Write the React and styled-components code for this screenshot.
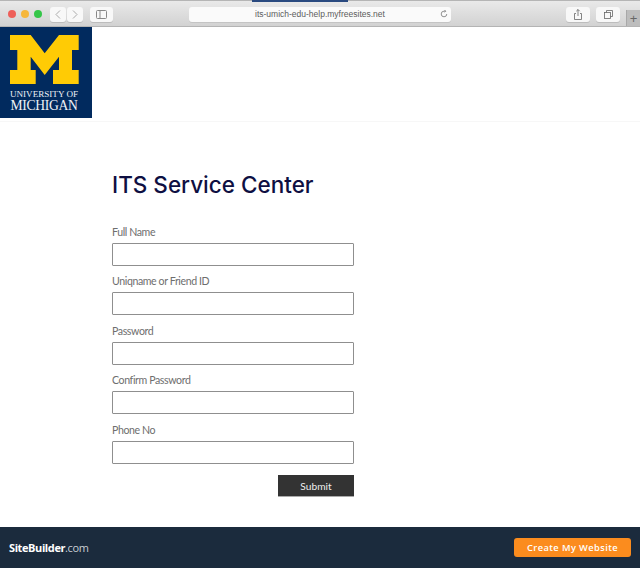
import React from 'react'
import styled, { createGlobalStyle } from 'styled-components'

const Global = createGlobalStyle`
  html, body { margin: 0; padding: 0; background: #fff; }
  body { font-family: "Open Sans", "Liberation Sans", sans-serif; }
  * { box-sizing: border-box; }
`

const Page = styled.div`
  width: 640px;
  height: 568px;
  display: flex;
  flex-direction: column;
  overflow: hidden;
`

const Chrome = styled.div`
  height: 27px;
  flex: none;
  position: relative;
  display: flex;
  align-items: center;
  padding: 1px 0 0 8px;
  background: linear-gradient(#e9e9e9, #d2d2d2);
  border-top: 1px solid #b5b5b5;
  border-bottom: 1px solid #b4b4b4;
`

const LoadBar = styled.div`
  position: absolute;
  top: -1px;
  left: 252px;
  width: 96px;
  height: 2px;
  background: #2a4a80;
`

const Dot = styled.span`
  width: 8px;
  height: 8px;
  margin-right: 5px;
  border-radius: 50%;
  background: ${p => p.$color};
`

const ChromeButton = styled.div`
  width: ${p => p.$w}px;
  height: 15px;
  margin-left: ${p => p.$ml || 0}px;
  flex: none;
  display: flex;
  align-items: center;
  justify-content: center;
  background: #f8f8f8;
  border-radius: 3px;
  box-shadow: 0 1px 0 #bdbdbd;
  color: #8a8a8a;
`

const UrlBar = styled.div`
  width: 262px;
  height: 15px;
  margin-left: 76px;
  flex: none;
  display: flex;
  align-items: center;
  justify-content: space-between;
  padding: 0 3px 0 66px;
  background: #fafafa;
  border-radius: 3px;
  box-shadow: 0 1px 0 #c4c4c4;
  font-family: "Liberation Sans", sans-serif;
  font-size: 8.5px;
  color: #5c5c5c;
`

const NewTab = styled.div`
  position: absolute;
  right: 0;
  bottom: 0;
  width: 14px;
  height: 16px;
  display: flex;
  align-items: center;
  justify-content: center;
  background: #bdbdbd;
  border-left: 1px solid #a8a8a8;
  color: #666;
  font-family: "Liberation Sans", sans-serif;
  font-size: 13px;
`

const Header = styled.header`
  height: 95px;
  flex: none;
  border-bottom: 1px solid #f7f7f7;
`

const Logo = styled.div`
  width: 92px;
  height: 91px;
  display: flex;
  flex-direction: column;
  align-items: center;
  padding: 8px 4px 0 0;
  background: #012a5e;
  color: #eef2f6;
  font-family: "Liberation Serif", serif;
  text-align: center;
`

const LogoTop = styled.div`
  margin-top: 5px;
  font-size: 9.1px;
  line-height: 10px;
  white-space: nowrap;
`

const LogoBottom = styled.div`
  font-size: 13.6px;
  line-height: 11px;
  margin-top: 1px;
  white-space: nowrap;
  letter-spacing: -0.3px;
`

const Main = styled.main`
  flex: 1;
  padding: 48.75px 0 0 112px;
`

const Title = styled.h1`
  margin: 0 0 26px;
  font-family: "Inter", "Liberation Sans", sans-serif;
  font-size: 22.5px;
  line-height: 28px;
  font-weight: 500;
  color: #0e0f42;
`

const Field = styled.div`
  width: 242px;
  margin-bottom: 8.5px;
`

const Label = styled.label`
  display: block;
  height: 18px;
  font-family: "Lato", sans-serif;
  font-size: 10.6px;
  letter-spacing: -0.4px;
  line-height: 14px;
  color: #6e6e6e;
`

const Input = styled.input`
  display: block;
  width: 100%;
  height: 23px;
  background: #fff;
  border: 1px solid #8f8f8f;
  border-radius: 1px;
  padding: 0 4px;
`

const Actions = styled.div`
  width: 242px;
  display: flex;
  justify-content: flex-end;
  margin-top: 11.25px;
`

const Submit = styled.button`
  width: 76px;
  height: 22px;
  background: #333;
  border: 0;
  border-bottom: 1px solid #aaa;
  color: #eee;
  font-family: "Lato", sans-serif;
  font-size: 10.2px;
`

const Footer = styled.footer`
  height: 41px;
  flex: none;
  display: flex;
  align-items: center;
  justify-content: space-between;
  padding: 0 9px;
  background: #1b2b3d;
`

const Brand = styled.div`
  font-family: "Open Sans", sans-serif;
  font-size: 11px;
  font-weight: 700;
  letter-spacing: -0.4px;
  color: #fff;
`

const BrandSuffix = styled.span`
  font-weight: 400;
  color: #c9ced4;
`

const Cta = styled.a`
  width: 117px;
  height: 19px;
  display: flex;
  align-items: center;
  justify-content: center;
  background: #fb8c1e;
  border-radius: 3px;
  font-family: "Open Sans", sans-serif;
  font-size: 9.3px;
  font-weight: 600;
  letter-spacing: 0.4px;
  color: #fff;
`

const fields = ['Full Name', 'Uniqname or Friend ID', 'Password', 'Confirm Password', 'Phone No']

export default function App() {
  return (
    <Page>
      <Global />
      <Chrome>
        <LoadBar />
        <Dot $color="#ee5f5a" />
        <Dot $color="#f6b73c" />
        <Dot $color="#34c649" />
        <ChromeButton $w={16} $ml={3}>
          <svg width="6" height="9" viewBox="0 0 6 9" fill="none" stroke="#aaa"><path d="M5 .5 1 4.5l4 4" /></svg>
        </ChromeButton>
        <ChromeButton $w={16} $ml={1}>
          <svg width="6" height="9" viewBox="0 0 6 9" fill="none" stroke="#aaa"><path d="M1 .5l4 4-4 4" /></svg>
        </ChromeButton>
        <ChromeButton $w={23} $ml={7}>
          <svg width="11" height="9" viewBox="0 0 11 9" fill="none" stroke="#888"><rect x=".5" y=".5" width="10" height="8" rx="1" /><path d="M4 .5v8" /></svg>
        </ChromeButton>
        <UrlBar>
          its-umich-edu-help.myfreesites.net
          <svg width="8" height="8" viewBox="0 0 8 8" fill="none" stroke="#777" strokeWidth=".8"><path d="M6.8 4A2.8 2.8 0 1 1 4 1.200h1.500M4.500 0l1.200 1.200L4.500 2.400" /></svg>
        </UrlBar>
        <ChromeButton $w={24} $ml={115}>
          <svg width="8" height="11" viewBox="0 0 8 11" fill="none" stroke="#666" strokeWidth=".8"><path d="M2 4.500H.5v6h7v-6H6M4 7V.5M2.300 2.200 4 .5l1.700 1.700" /></svg>
        </ChromeButton>
        <ChromeButton $w={24} $ml={6}>
          <svg width="9" height="9" viewBox="0 0 9 9" fill="none" stroke="#666" strokeWidth=".8"><path d="M2.500 2.500v-2h6v6h-2" /><rect x=".5" y="2.500" width="6" height="6" /></svg>
        </ChromeButton>
        <NewTab>+</NewTab>
      </Chrome>
      <Header>
        <Logo>
          <svg width="69" height="49" viewBox="0 0 69 49">
            <path fill="#ffcb05" d="M0 0h20.700l14 18.300L49 0h19.700v15H62v20h6.700v14H43V35h6V21.700L34.700 40 20.700 21.700V35h5v14H0V35h7.300V15H0z" />
          </svg>
          <LogoTop>UNIVERSITY OF</LogoTop>
          <LogoBottom>MICHIGAN</LogoBottom>
        </Logo>
      </Header>
      <Main>
        <Title>ITS Service Center</Title>
        {fields.map(name => (
          <Field key={name}>
            <Label>{name}</Label>
            <Input type="text" />
          </Field>
        ))}
        <Actions>
          <Submit>Submit</Submit>
        </Actions>
      </Main>
      <Footer>
        <Brand>SiteBuilder<BrandSuffix>.com</BrandSuffix></Brand>
        <Cta>Create My Website</Cta>
      </Footer>
    </Page>
  )
}
